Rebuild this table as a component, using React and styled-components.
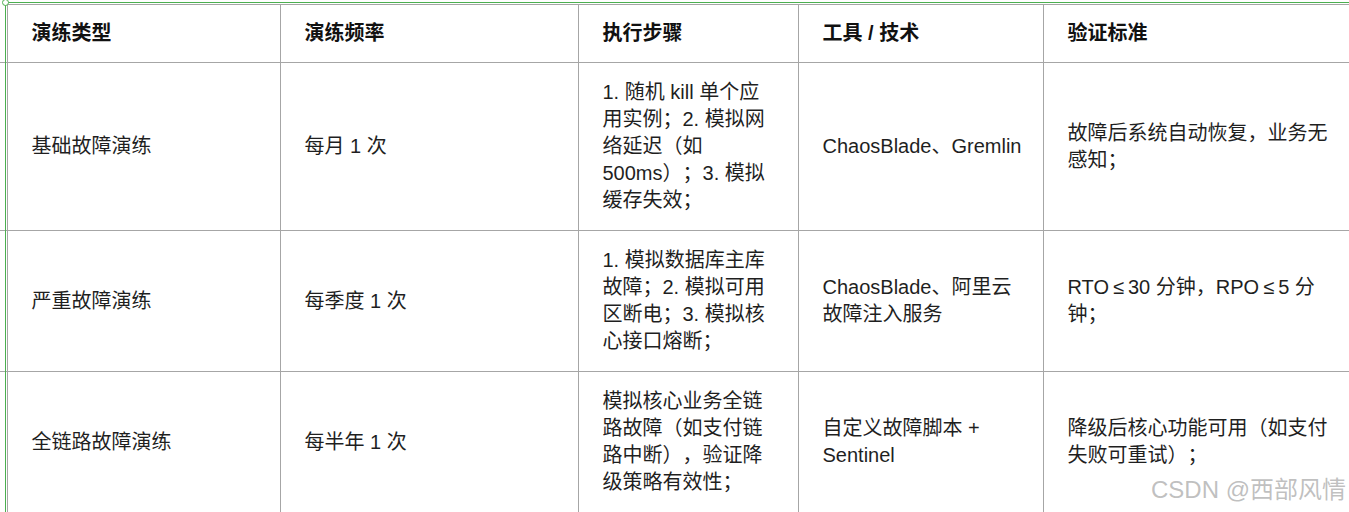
import React from "react"
import styled, { createGlobalStyle } from "styled-components"

const GlobalStyle = createGlobalStyle`
  html, body {
    margin: 0;
    padding: 0;
    background: #fff;
  }
  body {
    font-family: "Liberation Sans", "Noto Sans CJK SC", sans-serif;
    color: #1f1f1f;
    overflow: hidden;
  }
`

const Page = styled.div`
  position: relative;
  width: 1349px;
  height: 512px;
  padding-top: 4px;
  box-sizing: border-box;
  overflow: hidden;
`

const Selection = styled.div`
  position: absolute;
  left: 5px;
  top: 2px;
  right: -10px;
  bottom: -10px;
  border-top: 1px solid #4caf50;
  border-left: 1px solid #4caf50;
  pointer-events: none;

  &::before {
    content: "";
    position: absolute;
    left: -4px;
    top: -4px;
    width: 5px;
    height: 5px;
    border-radius: 50%;
    border: 1px solid #4caf50;
    background: #fff;
  }
`

const Table = styled.table`
  border-collapse: collapse;
  table-layout: fixed;
  width: 1360px;
  font-size: 20px;
  line-height: 27px;
  text-spacing-trim: space-all;
`

const Stub = styled.td`
  padding: 0;
  border-bottom: 1px solid #a6a6a6;
`

const Head = styled.th`
  text-align: left;
  font-weight: 700;
  color: #111;
  height: 58px;
  box-sizing: border-box;
  padding: 0 20px 0 24px;
  border: 1px solid #a6a6a6;
  vertical-align: middle;
`

const Cell = styled.td`
  padding: 16px 20px 16px 24px;
  border: 1px solid #a6a6a6;
  vertical-align: middle;
  height: ${p => p.$h}px;
  box-sizing: border-box;
`

// the "≤" sign takes a full CJK cell in the original
const Sym = styled.span`
  margin: 0 4px;
`

const Watermark = styled.div`
  position: absolute;
  right: 3px;
  bottom: 8px;
  font-size: 24px;
  line-height: 28px;
  color: rgba(150, 150, 150, 0.6);
  font-family: "Liberation Sans", "Noto Sans CJK SC", sans-serif;
`

const columns = [
  { title: "演练类型", width: 273 },
  { title: "演练频率", width: 298 },
  { title: "执行步骤", width: 220 },
  { title: "工具 / 技术", width: 245 },
  { title: "验证标准", width: 317 },
]

const rows = [
  {
    h: 168,
    cells: [
      "基础故障演练",
      "每月 1 次",
      "1. 随机 kill 单个应用实例；2. 模拟网络延迟（如 500ms）；3. 模拟缓存失效；",
      "ChaosBlade、Gremlin",
      "故障后系统自动恢复，业务无感知；",
    ],
  },
  {
    h: 140,
    cells: [
      "严重故障演练",
      "每季度 1 次",
      "1. 模拟数据库主库故障；2. 模拟可用区断电；3. 模拟核心接口熔断；",
      "ChaosBlade、阿里云故障注入服务",
      "RTO≤30 分钟，RPO≤5 分钟；",
    ],
  },
  {
    h: 140,
    cells: [
      "全链路故障演练",
      "每半年 1 次",
      "模拟核心业务全链路故障（如支付链路中断），验证降级策略有效性；",
      "自定义故障脚本 + Sentinel",
      "降级后核心功能可用（如支付失败可重试）；",
    ],
  },
]

function renderText(text) {
  const parts = text.split("≤")
  return parts.map((p, i) => (
    <React.Fragment key={i}>
      {i > 0 && <Sym>≤</Sym>}
      {p}
    </React.Fragment>
  ))
}

export default function App() {
  return (
    <>
      <GlobalStyle />
      <Page>
        <Table>
          <colgroup>
            <col style={{ width: 7 }} />
            {columns.map(c => (
              <col key={c.title} style={{ width: c.width }} />
            ))}
          </colgroup>
          <thead>
            <tr>
              <Stub />
              {columns.map(c => (
                <Head key={c.title}>{c.title}</Head>
              ))}
            </tr>
          </thead>
          <tbody>
            {rows.map((r, i) => (
              <tr key={i}>
                <Stub />
                {r.cells.map((text, j) => (
                  <Cell key={j} $h={r.h}>
                    {renderText(text)}
                  </Cell>
                ))}
              </tr>
            ))}
          </tbody>
        </Table>
        <Selection />
        <Watermark>CSDN @西部风情</Watermark>
      </Page>
    </>
  )
}
